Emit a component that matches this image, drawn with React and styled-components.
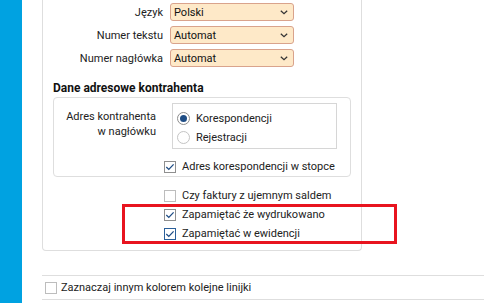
import React from 'react'
import styled, { createGlobalStyle } from 'styled-components'

const GlobalStyle = createGlobalStyle`
  html, body { margin: 0; padding: 0; background: #fff; }
  body {
    font-family: Roboto, "Liberation Sans", sans-serif;
    font-size: 11px;
    color: #222;
  }
`

const Page = styled.div`
  display: flex;
  height: 303px;
  overflow: hidden;
`

const Sidebar = styled.div`
  width: 22px;
  flex: none;
  background: #00a2e1;
`

const Main = styled.div`
  flex: 1;
  padding-left: 20px;
  display: flex;
  flex-direction: column;
`

const Panel = styled.div`
  width: 320px;
  box-sizing: border-box;
  border: 1px solid #dedede;
  border-top: none;
  border-radius: 0 0 4px 4px;
  padding: 3px 10px 7px;
`

const FieldRow = styled.div`
  display: flex;
  align-items: center;
  gap: 7px;
  height: 18px;
  & + & { margin-top: 5px; }
`

const FieldLabel = styled.label`
  width: 110px;
  text-align: right;
`

const SelectBox = styled.div`
  width: 124px;
  height: 18px;
  box-sizing: border-box;
  display: flex;
  align-items: center;
  justify-content: space-between;
  padding: 0 5px 0 3px;
  background: #fee9c8;
  border: 1px solid #d9a38c;
  border-radius: 3px;
  color: #111;
`

const SectionTitle = styled.div`
  margin-top: 14px;
  font-size: 12px;
  font-weight: bold;
  line-height: 15px;
  color: #111;
`

const GroupBox = styled.div`
  margin-top: 1px;
  border: 1px solid #dedede;
  border-radius: 4px;
  padding: 5px 0 0;
`

const GroupGrid = styled.div`
  display: grid;
  grid-template-columns: 102px 165px;
  column-gap: 16px;
  align-items: start;
`

const GroupLabel = styled.div`
  text-align: right;
  line-height: 15px;
  padding-top: 6px;
`

const RadioFrame = styled.div`
  box-sizing: border-box;
  border: 1px solid #d6d6d6;
  padding: 5px 0 1px 4px;
`

const OptionRow = styled.label`
  display: flex;
  align-items: center;
  gap: ${p => p.$gap || 6}px;
  height: 19px;
  white-space: nowrap;
`

const RadioCircle = styled.span`
  width: 13px;
  height: 13px;
  box-sizing: border-box;
  border-radius: 50%;
  border: 1px solid ${p => (p.$on ? '#8d8d8d' : '#c4c4c4')};
  background: #fff;
  display: flex;
  align-items: center;
  justify-content: center;
  flex: none;
  &::after {
    content: '';
    width: 7px;
    height: 7px;
    border-radius: 50%;
    background: ${p => (p.$on ? '#1f4d85' : 'transparent')};
  }
`

const Box = styled.span`
  width: 12px;
  height: 12px;
  box-sizing: border-box;
  border: 1px solid ${p => (p.$focus ? '#2a5f9a' : p.$on ? '#8f8f8f' : '#bdbdbd')};
  background: #fff;
  display: flex;
  align-items: center;
  justify-content: center;
  flex: none;
`

const InnerCheck = styled.div`
  margin: 8px 0 0 110px;
`

const CheckList = styled.div`
  position: relative;
  margin: 9px 0 0 111px;
`

const Highlight = styled.div`
  position: absolute;
  left: -42px;
  right: -46px;
  top: 18px;
  bottom: -1px;
  border: 3px solid #e8141f;
  pointer-events: none;
`

const BottomRow = styled.div`
  margin-top: 24px;
  height: 23px;
  border-top: 1px solid #dedede;
  border-bottom: 1px solid #dedede;
  padding-left: 3px;
  display: flex;
  align-items: center;
`

const Chevron = () => (
  <svg width="8" height="5" viewBox="0 0 8 5">
    <path d="M0.8 0.8 L4 3.8 L7.2 0.8" fill="none" stroke="#333" strokeWidth="1.2" />
  </svg>
)

const Check = ({ checked, focus, label, gap }) => (
  <OptionRow $gap={gap}>
    <Box $on={checked} $focus={focus}>
      {checked && (
        <svg width="10" height="10" viewBox="0 0 10 10">
          <path d="M1.3 5 L3.8 7.4 L8.6 2.4" fill="none" stroke="#1f4d85" strokeWidth="1.3" />
        </svg>
      )}
    </Box>
    <span>{label}</span>
  </OptionRow>
)

const Radio = ({ checked, label }) => (
  <OptionRow>
    <RadioCircle $on={checked} />
    <span>{label}</span>
  </OptionRow>
)

const Select = ({ value }) => (
  <SelectBox>
    <span>{value}</span>
    <Chevron />
  </SelectBox>
)

const fields = [
  { label: 'Język', value: 'Polski' },
  { label: 'Numer tekstu', value: 'Automat' },
  { label: 'Numer nagłówka', value: 'Automat' },
]

export default function App() {
  return (
    <>
      <GlobalStyle />
      <Page>
        <Sidebar />
        <Main>
          <Panel>
            {fields.map(f => (
              <FieldRow key={f.label}>
                <FieldLabel>{f.label}</FieldLabel>
                <Select value={f.value} />
              </FieldRow>
            ))}

            <SectionTitle>Dane adresowe kontrahenta</SectionTitle>
            <GroupBox>
              <GroupGrid>
                <GroupLabel>
                  Adres kontrahenta
                  <br />
                  w nagłówku
                </GroupLabel>
                <RadioFrame>
                  <Radio checked label="Korespondencji" />
                  <Radio label="Rejestracji" />
                </RadioFrame>
              </GroupGrid>
              <InnerCheck>
                <Check checked label="Adres korespondencji w stopce" />
              </InnerCheck>
            </GroupBox>

            <CheckList>
              <Check label="Czy faktury z ujemnym saldem" />
              <Check checked label="Zapamiętać że wydrukowano" />
              <Check checked focus label="Zapamiętać w ewidencji" />
              <Highlight />
            </CheckList>
          </Panel>

          <BottomRow>
            <Check gap={4} label="Zaznaczaj innym kolorem kolejne linijki" />
          </BottomRow>
        </Main>
      </Page>
    </>
  )
}
